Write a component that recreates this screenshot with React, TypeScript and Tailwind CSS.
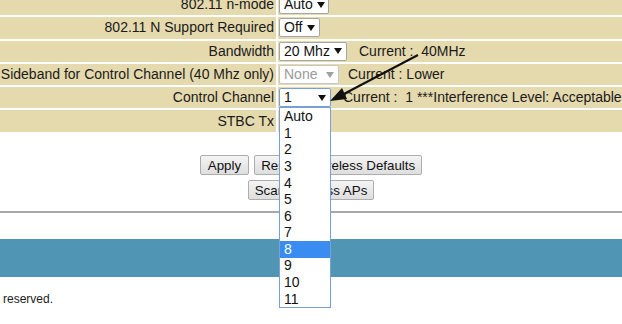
import React from 'react';

const channels = ['Auto', '1', '2', '3', '4', '5', '6', '7', '8', '9', '10', '11'];

function Caret({ disabled }: { disabled?: boolean }) {
  return (
    <svg width="8" height="6" viewBox="0 0 8 6" className="ml-[4px] shrink-0">
      <path d="M0 0 L8 0 L4 6 Z" fill={disabled ? '#a0a0a0' : '#111'} />
    </svg>
  );
}

function Select({
  value,
  width,
  disabled,
  focused,
}: {
  value: string;
  width: string;
  disabled?: boolean;
  focused?: boolean;
}) {
  return (
    <div
      className={`flex h-[19px] items-center justify-between rounded-[2px] border bg-white pl-[4px] pr-[4px] ${width} ${
        focused ? 'border-[#7a9fd6]' : disabled ? 'border-[#c8c8c8]' : 'border-[#a6a6a6]'
      } ${disabled ? 'text-[#9a9a9a]' : 'text-[#111]'}`}
    >
      <span>{value}</span>
      <Caret disabled={disabled} />
    </div>
  );
}

function Row({ label, children }: { label: string; children?: React.ReactNode }) {
  return (
    <div className="flex h-[21.3px] gap-[2px]">
      <div className="flex w-[276px] shrink-0 items-center justify-end whitespace-nowrap bg-[#e5d9ae] pr-[2px]">
        {label}
      </div>
      <div className="flex flex-1 items-center bg-[#e5d9ae] pl-[1px]">{children}</div>
    </div>
  );
}

export default function App() {
  return (
    <div className="relative h-[324px] w-[622px] overflow-hidden bg-white font-['Liberation_Sans',Arial,sans-serif] text-[14px] text-[#1a1a1a]">
      <div className="-mt-[6px] flex flex-col gap-[2px]">
        <Row label="802.11 n-mode">
          <Select value="Auto" width="w-[50px]" />
        </Row>
        <Row label="802.11 N Support Required">
          <Select value="Off" width="w-[41px]" />
        </Row>
        <Row label="Bandwidth">
          <Select value="20 Mhz" width="w-[68px]" />
          <span className="ml-[12px] whitespace-pre">Current :  40MHz</span>
        </Row>
        <Row label="Sideband for Control Channel (40 Mhz only)">
          <Select value="None" width="w-[60px]" disabled />
          <span className="ml-[9px] whitespace-pre">Current : Lower</span>
        </Row>
        <Row label="Control Channel">
          <div className="relative">
            <Select value="1" width="w-[52px]" focused />
            <div className="absolute left-0 top-[19px] z-10 w-[52px] border border-[#7a9fd6] bg-white">
              {channels.map((c) => (
                <div
                  key={c}
                  className={`flex h-[16.6px] items-center pl-[4px] ${
                    c === '8' ? 'bg-[#3b8cf0] text-white' : 'text-[#111]'
                  }`}
                >
                  {c}
                </div>
              ))}
            </div>
          </div>
          <span className="ml-[12px] whitespace-pre">Current :  1 ***Interference Level: Acceptable</span>
        </Row>
        <Row label="STBC Tx" />
      </div>

      <div className="mt-[23px] flex flex-col items-center gap-[5px] text-[13.33px]">
        <div className="flex gap-[5px]">
          <button className="h-[20px] rounded-[2px] border border-[#adadad] bg-gradient-to-b from-[#f4f4f4] to-[#dedede] px-[7px] text-[#111]">
            Apply
          </button>
          <button className="h-[20px] rounded-[2px] border border-[#adadad] bg-gradient-to-b from-[#f4f4f4] to-[#dedede] px-[6px] text-[#111]">
            Restore Wireless Defaults
          </button>
        </div>
        <button className="h-[20px] rounded-[2px] border border-[#adadad] bg-gradient-to-b from-[#f4f4f4] to-[#dedede] px-[6px] text-[#111]">
          Scan Wireless APs
        </button>
      </div>

      <div className="mt-[11px] h-[2px] bg-[#a8a8a8]" />
      <div className="mt-[26px] h-[38px] bg-[#5096b4]" />
      <div className="mt-[13px] pl-[3px] text-[12px] text-[#222]">reserved.</div>

      <svg className="pointer-events-none absolute left-0 top-0 z-20" width="622" height="324">
        <line x1="418" y1="55" x2="340" y2="96" stroke="#111" strokeWidth="2" />
        <path d="M330 101 L342 88 L347 99 Z" fill="#111" />
      </svg>
    </div>
  );
}
